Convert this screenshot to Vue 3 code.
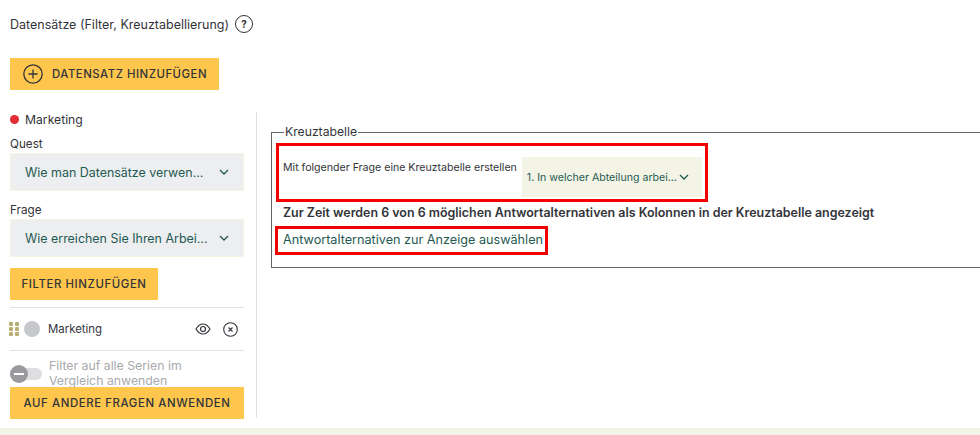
<script setup>
const selects = [
  { label: 'Quest', value: 'Wie man Datensätze verwen...' },
  { label: 'Frage', value: 'Wie erreichen Sie Ihren Arbei...' }
]
</script>

<template>
  <div class="page">
    <div class="heading">
      <span>Datensätze (Filter, Kreuztabellierung)</span>
      <span class="help">?</span>
    </div>

    <button class="btn add-btn">
      <svg width="20" height="20" viewBox="0 0 20 20" fill="none" stroke="#33343a" stroke-width="1.3">
        <circle cx="10" cy="10" r="9.2" />
        <path d="M10 5.5v9M5.5 10h9" />
      </svg>
      DATENSATZ HINZUFÜGEN
    </button>

    <div class="main">
      <aside class="side">
        <div class="series"><span class="dot"></span>Marketing</div>

        <div v-for="s in selects" :key="s.label" class="field">
          <label>{{ s.label }}</label>
          <div class="select">
            <span>{{ s.value }}</span>
            <svg class="chevron" width="10" height="6" viewBox="0 0 10 6" fill="none" stroke="#1f5a52" stroke-width="1.3">
              <path d="M1 1l4 4 4-4" />
            </svg>
          </div>
        </div>

        <button class="btn filter-btn">FILTER HINZUFÜGEN</button>

        <div class="filter-row">
          <svg class="grip" width="10" height="14" viewBox="0 0 10 14" fill="#b9ae72">
            <rect x="0" y="0" width="4" height="4" rx="1" />
            <rect x="6" y="0" width="4" height="4" rx="1" />
            <rect x="0" y="5" width="4" height="4" rx="1" />
            <rect x="6" y="5" width="4" height="4" rx="1" />
            <rect x="0" y="10" width="4" height="4" rx="1" />
            <rect x="6" y="10" width="4" height="4" rx="1" />
          </svg>
          <span class="grey-dot"></span>
          <span class="filter-name">Marketing</span>
          <svg class="eye" width="16" height="12" viewBox="0 0 16 12" fill="none" stroke="#33343a" stroke-width="1.2">
            <path d="M1 6c2-3.300 4.300-5 7-5s5 1.700 7 5c-2 3.300-4.300 5-7 5S3 9.300 1 6z" />
            <circle cx="8" cy="6" r="2.500" />
          </svg>
          <svg class="close" width="15" height="15" viewBox="0 0 15 15" fill="none" stroke="#33343a" stroke-width="1.1">
            <circle cx="7.500" cy="7.500" r="6.800" />
            <path d="M5.500 5.500l4 4M9.500 5.500l-4 4" />
          </svg>
        </div>

        <div class="toggle-row">
          <div class="toggle"><span class="knob"></span></div>
          <span class="toggle-label">Filter auf alle Serien im Vergleich anwenden</span>
        </div>

        <button class="btn apply-btn">AUF ANDERE FRAGEN ANWENDEN</button>
      </aside>

      <section class="content">
        <fieldset class="cross">
          <legend>Kreuztabelle</legend>
          <div class="marked row-box">
            <span class="row-label">Mit folgender Frage eine Kreuztabelle erstellen</span>
            <div class="mini-select">
              <span>1. In welcher Abteilung arbei...</span>
              <svg class="chevron" width="10" height="6" viewBox="0 0 10 6" fill="none" stroke="#1f5a52" stroke-width="1.3">
                <path d="M1 1l4 4 4-4" />
              </svg>
            </div>
          </div>
          <p class="info">Zur Zeit werden 6 von 6 möglichen Antwortalternativen als Kolonnen in der Kreuztabelle angezeigt</p>
          <a class="marked pick">Antwortalternativen zur Anzeige auswählen</a>
        </fieldset>
      </section>
    </div>

    <div class="strip"></div>
  </div>
</template>

<style>
html, body {
  margin: 0;
  overflow: hidden;
  background: #fff;
}
</style>

<style scoped>
.page {
  width: 980px;
  height: 435px;
  overflow: hidden;
  display: flex;
  flex-direction: column;
  font-family: Inter, "Liberation Sans", sans-serif;
  color: #33343a;
  box-sizing: border-box;
}

.heading {
  display: flex;
  align-items: center;
  gap: 6px;
  height: 18px;
  margin: 15px 0 0 10px;
  font-size: 12.5px;
}

.help {
  width: 18px;
  height: 18px;
  box-sizing: border-box;
  border: 1.3px solid #33343a;
  border-radius: 50%;
  display: flex;
  align-items: center;
  justify-content: center;
  font-size: 10px;
  font-weight: 700;
}

.btn {
  border: 0;
  background: #ffc64d;
  color: #33343a;
  font-family: inherit;
  font-weight: 500;
  font-size: 11.4px;
  letter-spacing: 0.6px;
  padding: 0;
  white-space: nowrap;
}

.add-btn {
  display: flex;
  align-items: center;
  gap: 9px;
  width: 209px;
  height: 32px;
  margin: 25px 0 0 10px;
  padding-left: 13px;
  box-sizing: border-box;
  letter-spacing: 0.5px;
}

.main {
  display: flex;
  height: 306px;
  margin-top: 22px;
}

.side {
  width: 257px;
  box-sizing: border-box;
  padding: 0 12px 0 10px;
  border-right: 1px solid #e0e0e0;
  margin-right: 14px;
  flex-shrink: 0;
  height: 306px;
}

.series {
  display: flex;
  align-items: center;
  gap: 6px;
  font-size: 12.2px;
  height: 14px;
}

.dot {
  width: 9px;
  height: 9px;
  border-radius: 50%;
  background: #e32d34;
}

.field {
  margin-top: 10px;
}

.field + .field {
  margin-top: 11px;
}

.field label {
  display: block;
  font-size: 11.7px;
  height: 16px;
  line-height: 16px;
  margin-bottom: 1px;
}

.select {
  height: 38px;
  background: #eceef0;
  border: 1px solid #f5f3e2;
  box-sizing: border-box;
  display: flex;
  align-items: center;
  justify-content: space-between;
  padding: 0 14px;
  font-size: 12.45px;
  color: #1f5a52;
  white-space: nowrap;
}

.chevron {
  flex-shrink: 0;
}

.filter-btn {
  display: block;
  width: 148px;
  height: 32px;
  margin-top: 11px;
}

.filter-row {
  display: flex;
  align-items: center;
  box-sizing: border-box;
  height: 44px;
  margin-top: 7px;
  border-top: 1px solid #e2e2e2;
  border-bottom: 1px solid #e2e2e2;
  font-size: 11.4px;
}

.grey-dot {
  width: 16px;
  height: 16px;
  border-radius: 50%;
  background: #c6c8cc;
  margin: 0 8px 0 5px;
}

.grip {
  margin-left: -1px;
}

.filter-name {
  flex: 1;
}

.eye {
  margin-right: 1px;
}

.close {
  margin: 0 6px 0 11px;
}

.toggle-row {
  display: flex;
  align-items: flex-start;
  gap: 7px;
  height: 36px;
  font-size: 12.3px;
  color: #a9a9ad;
}

.toggle {
  position: relative;
  width: 32px;
  height: 12px;
  margin-top: 17px;
  border-radius: 6px;
  background: #dedee0;
  flex-shrink: 0;
}

.knob {
  position: absolute;
  left: 0;
  top: -3px;
  width: 18px;
  height: 18px;
  border-radius: 50%;
  background: #9a9a9e;
}

.knob::after {
  content: "";
  position: absolute;
  left: 4px;
  top: 8px;
  width: 10px;
  height: 2px;
  background: #fff;
}

.toggle-label {
  line-height: 15px;
  padding-top: 7px;
  width: 165px;
}

/* sits over the last line of the toggle label, same as the original */
.apply-btn {
  position: relative;
  display: block;
  width: 234px;
  height: 32px;
}

.content {
  flex: 1;
  min-width: 0;
  padding-top: 12px;
}

.cross {
  margin: 0;
  padding: 0 0 11px 4px;
  width: 760px;
  height: 144px;
  box-sizing: border-box;
  border: 1px solid #666;
}

.cross legend {
  font-size: 12.2px;
  padding: 0 1px;
  margin-left: 8px;
  line-height: 16px;
}

.marked {
  border: 3px solid #f50000;
  box-sizing: border-box;
}

.row-box {
  display: flex;
  width: 432px;
  height: 59px;
  margin-top: 3px;
  padding: 11px 0 0 4px;
}

.row-label {
  font-size: 10.6px;
  line-height: 16px;
  margin: 3px 5px 0 0;
  white-space: nowrap;
}

.mini-select {
  display: flex;
  align-items: center;
  justify-content: space-between;
  width: 180px;
  height: 40px;
  background: #f3f4e6;
  box-sizing: border-box;
  padding: 0 13px 0 5px;
  font-size: 10.6px;
  color: #1f5a52;
  white-space: nowrap;
}

.info {
  margin: 3px 0 0 7px;
  font-size: 12.45px;
  font-weight: 600;
  line-height: 16px;
  white-space: nowrap;
}

.pick {
  display: inline-block;
  margin: 5px 0 0 -1px;
  padding: 0 2px 0 5px;
  height: 29px;
  line-height: 22px;
  font-size: 12.65px;
  color: #1f5a52;
  white-space: nowrap;
}

.strip {
  height: 7px;
  margin-top: 10px;
  background: #f3f4e6;
}
</style>
